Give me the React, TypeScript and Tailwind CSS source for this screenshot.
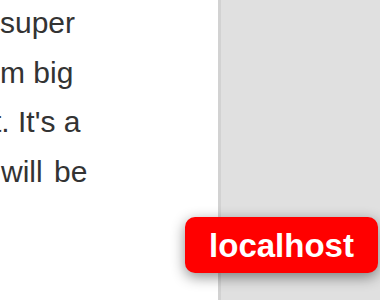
export default function App() {
  const lines = [
    { text: 'super', cls: 'ml-0' },
    { text: 'm big', cls: 'ml-0' },
    { text: 't. It\'s a', cls: '-ml-[7px]' },
    { text: 'will be', cls: 'ml-[1px] [word-spacing:3px]' },
  ];

  return (
    <div
      className="relative flex h-[300px] w-[380px] overflow-hidden"
      style={{ fontFamily: '"Liberation Sans", Arial, sans-serif' }}
    >
      <div className="w-[218px] shrink-0 overflow-hidden bg-white">
        <div className="-mt-[2px] text-[30px] leading-[49.6px] text-[#333333]">
          {lines.map((l, i) => (
            <div key={i} className={`whitespace-nowrap ${l.cls}`}>
              {l.text}
            </div>
          ))}
        </div>
      </div>
      <div className="flex-1 border-l-[3px] border-[#d2d2d2] bg-[#e0e0e0]" />

      <div className="absolute left-[185px] top-[217px] flex h-[56px] w-[193px] items-center justify-center rounded-[10px] bg-[#ff0000] shadow-[0_4px_14px_rgba(0,0,0,0.45)]">
        <span className="text-[33px] font-bold leading-none text-white">localhost</span>
      </div>
    </div>
  );
}
